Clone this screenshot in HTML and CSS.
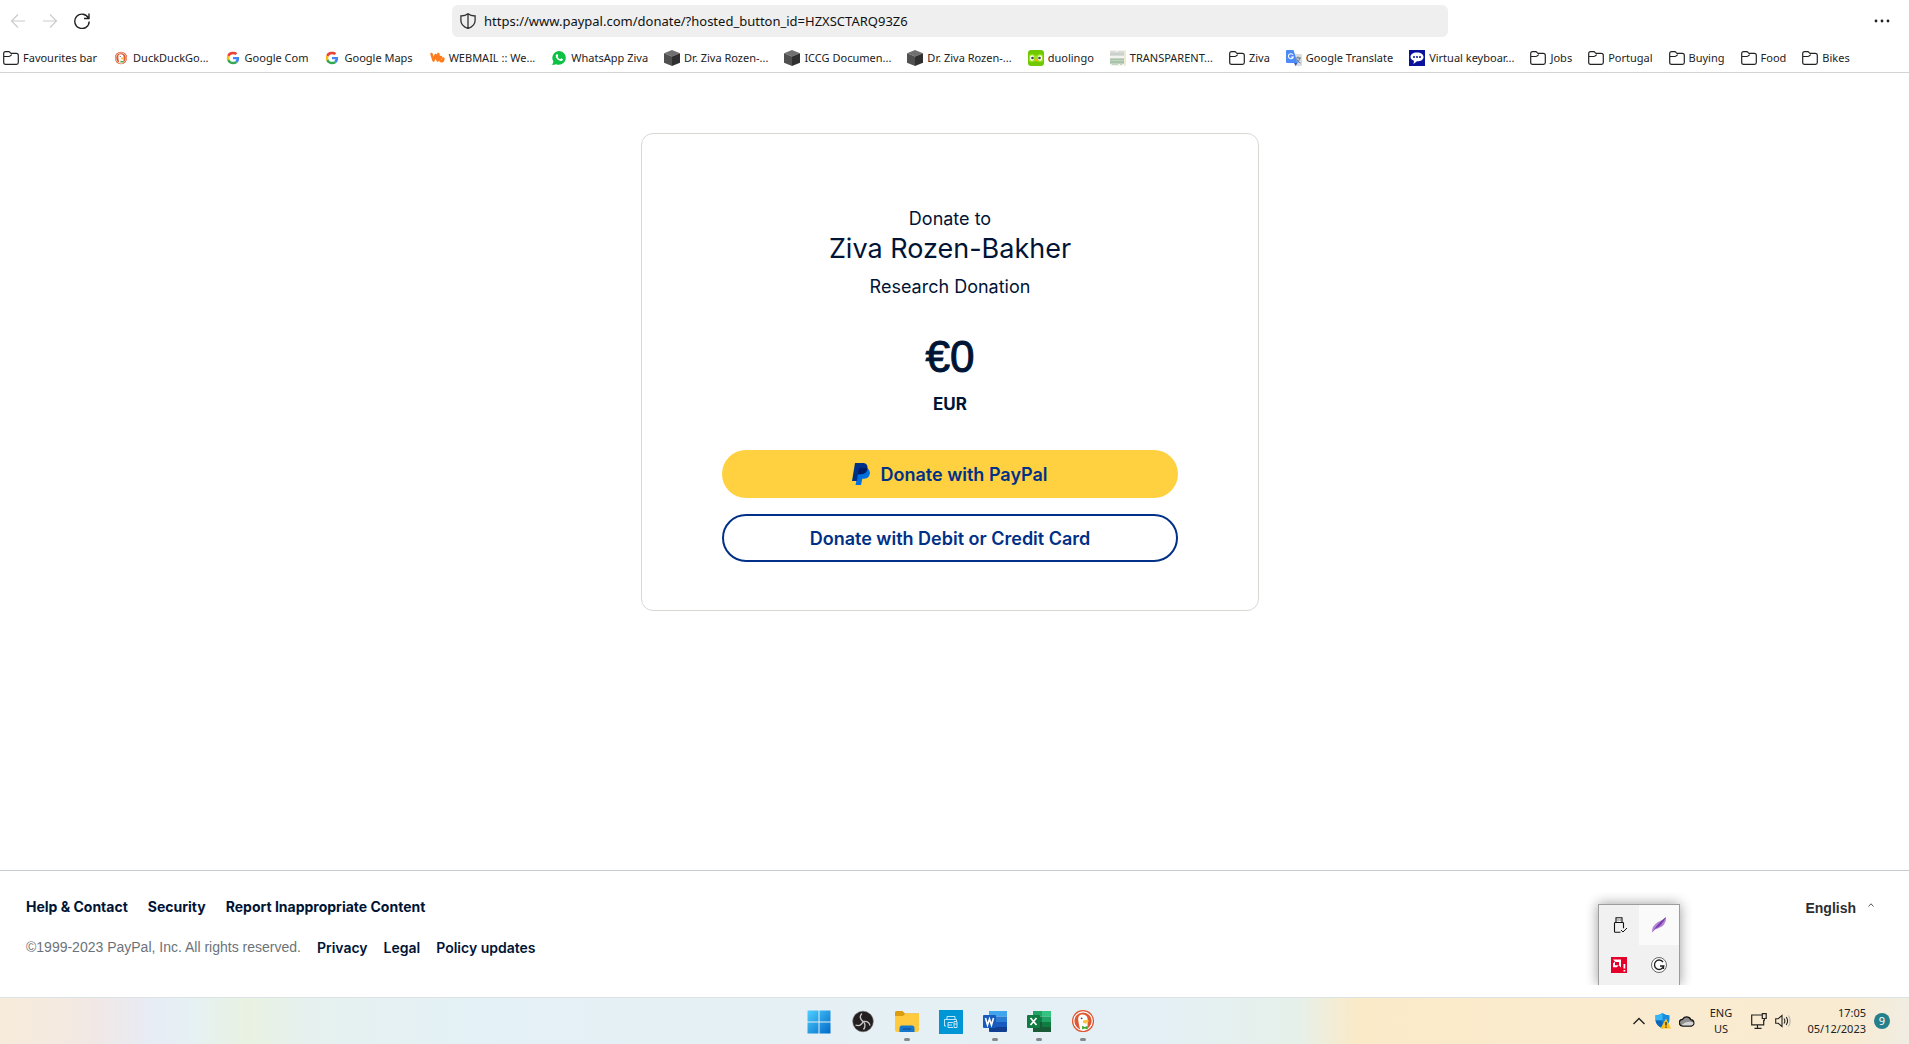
FILE: index.html
```html
<!DOCTYPE html>
<html lang="en">
<head>
<meta charset="utf-8">
<meta name="viewport" content="width=device-width, initial-scale=1">
<title>Donate</title>
<link rel="stylesheet" href="styles.css">
</head>
<body>
<svg class="defs" aria-hidden="true">
  <symbol id="folder" viewBox="0 0 16 16"><path d="M.7 12.5v-9q0-1.8 1.8-1.8h3.2q.8 0 1.3.6l1 1.1h5.300q2 0 2 2v7.100q0 1.800-1.800 1.800h-11q-1.800 0-1.800-1.800zM.7 6.500h5.200q.8 0 1.400-.6l1.500-1.300" fill="none" stroke="#222" stroke-width="1.200"/></symbol>
  <symbol id="google" viewBox="0 0 48 48"><path fill="#ea4335" d="M24 9.500c3.540 0 6.710 1.220 9.210 3.600l6.850-6.850C35.900 2.380 30.470 0 24 0 14.620 0 6.510 5.380 2.560 13.220l7.980 6.190C12.430 13.720 17.740 9.500 24 9.500z"/><path fill="#4285f4" d="M46.980 24.550c0-1.570-.15-3.090-.38-4.550H24v9.020h12.940c-.58 2.960-2.260 5.480-4.780 7.180l7.730 6c4.510-4.180 7.090-10.360 7.090-17.650z"/><path fill="#fbbc05" d="M10.530 28.590c-.48-1.450-.76-2.990-.76-4.590s.27-3.140.76-4.590l-7.980-6.190C.92 16.460 0 20.120 0 24s.92 7.540 2.560 10.780l7.970-6.190z"/><path fill="#34a853" d="M24 48c6.480 0 11.930-2.130 15.890-5.810l-7.730-6c-2.150 1.450-4.920 2.300-8.160 2.300-6.260 0-11.570-4.220-13.470-9.910l-7.980 6.190C6.510 42.620 14.620 48 24 48z"/></symbol>
  <symbol id="cube" viewBox="0 0 16 16"><path d="M8 0l8 3.200L8 6.400 0 3.200z" fill="#707070"/><path d="M0 3.200l8 3.200V16l-8-3.200z" fill="#505050"/><path d="M16 3.200L8 6.400V16l8-3.200z" fill="#303030"/></symbol>
  <symbol id="duck" viewBox="0 0 24 24"><circle cx="12" cy="12" r="12" fill="#de5833"/><circle cx="12" cy="12" r="10" fill="none" stroke="#fff" stroke-width="1.300"/><path d="M9 21.500C8 17 6.500 12 6.800 9c.2-2 1.500-3.500 3.500-4 4-.6 6.700 1.500 6.700 5v8c0 1-1 3-2 3.600-2 .5-4 .5-6-.1z" fill="#fff"/><circle cx="10.500" cy="9" r="1" fill="#34495e"/><path d="M12 11.500c3-.8 6-.8 6.500.3.200.9-2 1.200-3.500 1.300 1.500.6 2 1.300.7 1.600-2.500.3-4.700-1-3.700-3.200z" fill="#fdc02f"/><path d="M11 17l3 1.500 3-1.500v4l-3-1-3 1z" fill="#42a936"/></symbol>
</svg>

<header class="browser">
  <div class="toolbar">
    <div class="nav">
      <button class="tool" aria-label="Back" disabled><svg viewBox="0 0 16 16"><path d="M15 8H1.500M8 1.500L1.500 8 8 14.500" fill="none" stroke="#ccc" stroke-width="1.200"/></svg></button>
      <button class="tool" aria-label="Forward" disabled><svg viewBox="0 0 16 16"><path d="M1 8h13.500M8 1.500L14.500 8 8 14.500" fill="none" stroke="#ccc" stroke-width="1.200"/></svg></button>
      <button class="tool" aria-label="Reload"><svg viewBox="0 0 16 16"><path d="M14.500 5.200A7.200 7.200 0 1 0 15.200 8.500M15 .5v5h-5" fill="none" stroke="#222" stroke-width="1.400"/></svg></button>
    </div>
    <div class="address">
      <svg class="i16" viewBox="0 0 16 16"><path d="M8 .8C6 2.400 3.500 2.900.9 3v4.500C.9 11.500 4 14 8 15.500c4-1.500 7.100-4 7.100-8V3C12.500 2.900 10 2.400 8 .8zM8 .8v14.700" fill="none" stroke="#333" stroke-width="1.300"/></svg>
      <input class="url" type="text" aria-label="Address" value="https://www.paypal.com/donate/?hosted_button_id=HZXSCTARQ93Z6">
    </div>
    <div class="menu">
      <button class="tool" aria-label="Menu"><svg viewBox="0 0 16 16"><g fill="#222"><circle cx="2" cy="8" r="1.400"/><circle cx="8" cy="8" r="1.400"/><circle cx="14" cy="8" r="1.400"/></g></svg></button>
    </div>
  </div>
  <nav class="bookmarks" aria-label="Bookmarks">
    <a href="#"><svg><use href="#folder"/></svg>Favourites bar</a>
    <a href="#"><svg viewBox="-2 -1 18 18"><use href="#duck" width="14" height="16"/></svg>DuckDuckGo...</a>
    <a href="#"><svg viewBox="-2 -2 20 20"><use href="#google" width="16" height="16"/></svg>Google Com</a>
    <a href="#"><svg viewBox="-2 -2 20 20"><use href="#google" width="16" height="16"/></svg>Google Maps</a>
    <a href="#"><svg viewBox="0 0 16 16"><path d="M2.500 4l2 6.500L6.700 5l2 5.500Q10.300 8 9.300 4M12 7q-1.500 4 .3 4.300 2.200.2 2-2.800" fill="none" stroke="#ff7a1a" stroke-width="2.500" stroke-linejoin="round" stroke-linecap="round"/></svg>WEBMAIL :: We...</a>
    <a href="#"><svg viewBox="0 0 16 16"><path d="M8.300 1A6.900 6.900 0 0 0 2.400 11.500L1.200 15.200l3.900-1A6.900 6.900 0 1 0 8.300 1z" fill="#0cc143"/><path d="M5.300 4.500q1-1 1.500.2l.5 1.200-.7 1q1 1.700 2.700 2.300l.8-.9 1.900.9q-.2 2-2.200 1.800Q5.300 10 4.700 6q0-1 .6-1.500z" fill="#fff"/></svg>WhatsApp Ziva</a>
    <a href="#"><svg><use href="#cube"/></svg>Dr. Ziva Rozen-...</a>
    <a href="#"><svg><use href="#cube"/></svg>ICCG Documen...</a>
    <a href="#"><svg><use href="#cube"/></svg>Dr. Ziva Rozen-...</a>
    <a href="#"><svg viewBox="0 0 16 16"><rect width="16" height="16" rx="3" fill="#70c800"/><path d="M1 6q0-2 3-2 2.500 0 4 2 1.500-2 4-2 3 0 3 2v4q0 2-3 2T8 10q-1 2-4 2t-3-2z" fill="#9be51d"/><ellipse cx="4" cy="8" rx="2" ry="2.800" fill="#fff"/><ellipse cx="12" cy="8" rx="2" ry="2.800" fill="#fff"/><circle cx="4.500" cy="8" r="1.300" fill="#444"/><circle cx="11.500" cy="8" r="1.300" fill="#444"/><path d="M6.500 9.500q1.500-1.500 3 0L8 12z" fill="#ffb000"/></svg>duolingo</a>
    <a href="#"><svg viewBox="0 0 16 16"><rect width="16" height="16" fill="#f3f4f0"/><path d="M1 1v5M3 1v5M5 1v5M7 2v4M9 1v5M11 1v5M13 1v5M0 4h14" stroke="#bcc4c2"/><path d="M1 9v5M3 9v6M5 9v6M7 9v6M9 9v5M11 9v6M13 9v5M0 9h14M0 12h14" stroke="#8fb392"/><path d="M15 1v14" stroke="#eadfb5"/></svg>TRANSPARENT...</a>
    <a href="#"><svg><use href="#folder"/></svg>Ziva</a>
    <a href="#"><svg viewBox="0 0 16 16"><path d="M7 4h8q1 0 1 1v10q0 1-1 1H9.500z" fill="#dadce0"/><path d="M9 8h6M12 6.500V8M14 8q-1 4-4 5M10.500 9q1 3 4 4" stroke="#607d8b" fill="none"/><path d="M1 0h6.500l4 13H1q-1 0-1-1V1q0-1 1-1z" fill="#4c8bf5"/><path d="M8 13h3.500L9.500 16z" fill="#3559c7"/><path d="M7 4.800A2.500 2.500 0 1 0 7.300 7H5" fill="none" stroke="#fff" stroke-width="1.100"/></svg>Google Translate</a>
    <a href="#"><svg viewBox="0 0 16 16"><rect width="16" height="16" fill="#0a129b"/><path d="M8 2.500c4 0 6.500 1.800 6.500 4.500S12 11.300 8 11.300L4.500 14l.5-3.200C2.800 10 1.500 8.700 1.500 7c0-2.700 2.500-4.500 6.500-4.500z" fill="#fff"/><path d="M4 6.300h2v1.500H4zm3 0h2v1.500H7zm3 0h2v1.500h-2z" fill="#0a129b"/></svg>Virtual keyboar...</a>
    <a href="#"><svg><use href="#folder"/></svg>Jobs</a>
    <a href="#"><svg><use href="#folder"/></svg>Portugal</a>
    <a href="#"><svg><use href="#folder"/></svg>Buying</a>
    <a href="#"><svg><use href="#folder"/></svg>Food</a>
    <a href="#"><svg><use href="#folder"/></svg>Bikes</a>
  </nav>
</header>

<main class="page">
  <section class="card">
    <p class="lead">Donate to</p>
    <h1 class="name">Ziva Rozen-Bakher</h1>
    <p class="purpose">Research Donation</p>
    <p class="amount">€0</p>
    <p class="currency">EUR</p>
    <button class="btn btn-paypal"><svg class="pp" viewBox="0 0 18 22"><path d="M6 5h9q3.500 2 2.800 6-1 4.500-5.500 4.700h-2L9 22H3.500L5 15z" fill="#0070e0"/><path d="M3 0h8.500q4.500.5 4 5.500-1 5.500-6.500 5.700H6L4.900 18H0z" fill="#003087"/><path d="M15.500 5.200q-1 5.800-6.500 6H6l.8-4.700Q7 5 8.500 4.800h5q1.300 0 2 .4z" fill="#001c64"/></svg>Donate with PayPal</button>
    <button class="btn btn-card">Donate with Debit or Credit Card</button>
  </section>
</main>

<footer class="footer">
  <div class="links">
    <div class="row row-main"><a href="#">Help &amp; Contact</a><a href="#">Security</a><a href="#">Report Inappropriate Content</a></div>
    <div class="row row-legal"><span class="copy">©1999-2023 PayPal, Inc. All rights reserved.</span><a href="#">Privacy</a><a href="#">Legal</a><a href="#">Policy updates</a></div>
  </div>
  <button class="language">English<svg viewBox="0 0 6 4"><path d="M.5 3.500L3 .8l2.500 2.700" fill="none" stroke="#555"/></svg></button>
  <div class="popup-clip">
    <div class="popup">
      <button aria-label="Eject USB"><svg viewBox="0 0 16 16"><path d="M5 5.500V.7h6v4.800M9.500 15.300H4.200q-.7 0-.7-.7V6.200q0-.7.7-.7h7.600q.7 0 .7.700v5M6.500 3h1M8.700 3h1" fill="none" stroke="#111" stroke-width="1.100"/><path d="M10 13l2 2 4-4" fill="none" stroke="#111"/></svg></button>
      <button class="lit" aria-label="Quill"><svg viewBox="0 0 16 16"><path d="M1 15.500Q.5 9 7 5q5-2 8-5 .5 6-4 9.500-4 2-7 3z" fill="#b388d6"/><path d="M1 15.500Q6 7 15 0q-4 9-11 12z" fill="#7d3cae"/></svg></button>
      <button aria-label="Graphics"><svg viewBox="0 0 16 16"><rect width="16" height="16" fill="#e4002b"/><path d="M2 2.500h8v8l-2-2V5H4.500zM2 6.500l2-2v3.800h3.800l-2 2H2z" fill="#fff"/><path d="M12.500 7h1.800v4.500h-1.800zm0 6h1.800v1.500h-1.800z" fill="#fff"/></svg></button>
      <button aria-label="Grammar"><svg viewBox="0 0 16 16"><circle cx="8" cy="8" r="7.500" fill="#fff" stroke="#444" stroke-width=".8"/><path d="M12 5a4.700 4.700 0 1 0 .7 4H9M12.500 8.500V12" fill="none" stroke="#222" stroke-width="1.400"/></svg></button>
    </div>
  </div>
</footer>

<div class="taskbar">
  <div class="apps">
    <button aria-label="Start"><svg viewBox="0 0 24 24"><defs><linearGradient id="win" x2="1" y2="1"><stop stop-color="#4fd0ff"/><stop offset="1" stop-color="#0068c8"/></linearGradient></defs><path d="M.5.500h11v11H.5zm12 0h11v11h-11zm-12 12h11v11H.5zm12 0h11v11h-11z" fill="url(#win)"/></svg></button>
    <button aria-label="Recorder"><svg viewBox="0 0 24 24"><circle cx="12" cy="11.500" r="10.300" fill="#231f20" stroke="#666" stroke-width=".6"/><path d="M11 3.500q-4 4 1 8 6-1 7 4M12 11.500Q10 17 4.500 15M12.500 11.500q3 4 0 8M12 11.500Q8 8 10 5" fill="none" stroke="#c8c6c6" stroke-width="1.300"/></svg></button>
    <button class="open" aria-label="Files"><svg viewBox="0 0 24 24"><path d="M0 2.500Q0 1 1.500 1h6l2.500 2.500H24V8H0z" fill="#dd9c0b"/><path d="M0 6h8l2.500-2.500H23q1 0 1 1V20q0 2-2 2H2q-2 0-2-2z" fill="#ffca3e"/><path d="M4.500 22v-4q0-2.500 2.500-2.500h10q2.500 0 2.500 2.500v4z" fill="#1476cc"/><path d="M8 19h8" stroke="#0a4a8c"/></svg></button>
    <button aria-label="Printer"><svg viewBox="0 0 24 24"><rect width="24" height="24" fill="#0096d6"/><path d="M8 9V6.500h8V9M7 16H5.500V9.500h12V11M9 17.500v-5h5M9 15h4M9 17.500h5M15 11.500h3v6h-3zM15 14h3" fill="none" stroke="#d5f0ff" stroke-width=".9"/></svg></button>
    <button class="open" aria-label="Word"><svg viewBox="0 0 24 24"><path d="M6 1h18v5.500H6z" fill="#41a5ee"/><path d="M6 6.500h18V12H6z" fill="#2b7cd3"/><path d="M6 12h18v5H6z" fill="#185abd"/><path d="M6 17h18v4q0 1-1 1H7q-1 0-1-1z" fill="#103f91"/><rect y="5" width="13" height="13" rx="1" fill="#185abd"/><path d="M2.500 8l2 7 2-6 2 6 2-7" fill="none" stroke="#fff" stroke-width="1.600"/></svg></button>
    <button class="open" aria-label="Excel"><svg viewBox="0 0 24 24"><path d="M6 1h9v5.500H6z" fill="#21a366"/><path d="M15 1h9v5.500h-9z" fill="#33c481"/><path d="M6 6.500h9V12H6z" fill="#107c41"/><path d="M15 6.500h9V12h-9z" fill="#21a366"/><path d="M6 12h18v10H6z" fill="#185c37"/><path d="M15 12h9v5h-9z" fill="#107c41"/><rect y="5" width="13" height="13" rx="1" fill="#107c41"/><path d="M3.500 8l6 7M9.500 8l-6 7" stroke="#fff" stroke-width="1.700"/></svg></button>
    <button class="open" aria-label="Duck browser"><svg viewBox="-1 0 26 26"><use href="#duck" width="24" height="24"/></svg></button>
  </div>
  <div class="tray">
    <svg class="i16" viewBox="0 0 16 16"><path d="M2.500 11L8 5.500l5.500 5.500" fill="none" stroke="#222" stroke-width="1.400"/></svg>
    <svg class="i16" viewBox="0 0 16 16"><path d="M7.500 0Q10.500 2.200 14.500 2.300V7q0 5-7 8.500Q.5 12 .5 7V2.300Q4.500 2.200 7.500 0z" fill="#168bdf"/><path d="M7.500 0v7.500H.5V2.300Q4.500 2.200 7.500 0z" fill="#35b7f5"/><path d="M7.500 7.500v8Q1 12 .5 7.500z" fill="#0d64b8"/><path d="M11 5.500l5 10H5.500z" fill="#ffc21a"/><path d="M11 9v3.500M11 13.500v1.200" stroke="#222" stroke-width="1.300"/></svg>
    <svg class="i16" viewBox="0 0 16 16"><path d="M3.800 13a3.300 3.300 0 0 1-.3-6.600 4.600 4.600 0 0 1 8.300.3 3.200 3.200 0 0 1 .6 6.300z" fill="#8f8f8f" stroke="#111" stroke-width="1.300"/><path d="M2.500 12Q8 7 14.500 9.500q0 2.800-2.500 2.900H4q-1 0-1.500-.4z" fill="#d4d4d4"/></svg>
    <div class="lang"><span>ENG</span><span>US</span></div>
    <svg class="i16" viewBox="0 0 16 16"><path d="M11 2H.7v9.800h12V7M6.500 12v3M3.500 15.300h7M11.300.7h3.900v4.800h-3.900zM13.300 5.500v2.500" fill="none" stroke="#222" stroke-width="1.200"/></svg>
    <svg class="i16" viewBox="0 0 16 16"><path d="M.7 5.700h2.500L7 2.500v11l-3.800-3.200H.7zM9 5.500q1.800 2.500 0 5M11.200 4q2.800 4 0 8" fill="none" stroke="#222" stroke-width="1.100"/><path d="M13.500 2.500q3.300 5.500 0 11" fill="none" stroke="#aaa"/></svg>
    <div class="clock"><span>17:05</span><span>05/12/2023</span></div>
    <span class="badge">9</span>
  </div>
</div>
</body>
</html>
```
FILE: styles.css
```css
* { box-sizing: border-box; }
body {
  margin: 0;
  min-height: 100vh;
  display: flex;
  flex-direction: column;
  background: #fff;
  color: #001435;
  font-family: Inter, "Liberation Sans", sans-serif;
}
p, h1 { margin: 0; font-weight: 400; }
a { color: inherit; text-decoration: none; }
button { border: 0; padding: 0; background: none; color: inherit; font: inherit; }
svg { display: block; flex: none; }
.defs { position: absolute; width: 0; height: 0; }
.i16 { width: 16px; height: 16px; }

/* Browser chrome */
.browser {
  border-bottom: 1px solid #d4d4d4;
  color: #222;
  font-family: "Noto Sans", "Open Sans", sans-serif;
}
.toolbar {
  display: grid;
  grid-template-columns: 1fr 996px 1fr;
  align-items: center;
  padding: 5px 9px 0 0;
}
.nav { display: flex; gap: 16px; padding-left: 10px; }
.tool { width: 16px; height: 16px; }
.tool svg { width: 16px; height: 16px; }
.menu { display: flex; justify-content: flex-end; padding-right: 10px; }
.address {
  display: flex;
  align-items: center;
  gap: 8px;
  height: 32px;
  padding: 0 8px;
  border-radius: 6px;
  background: #efefef;
}
.url {
  flex: 1;
  border: 0;
  padding: 0;
  background: none;
  color: #111;
  font: 13px/20px "Noto Sans", "Open Sans", sans-serif;
}
.bookmarks {
  display: flex;
  align-items: center;
  gap: 16px;
  height: 35px;
  padding: 7px 3px 0;
  font-size: 11px;
  line-height: 16px;
  white-space: nowrap;
}
.bookmarks a { display: flex; align-items: center; gap: 4px; }
.bookmarks svg { width: 16px; height: 16px; }

/* Donation card */
.page { flex: 1; padding: 60px 9px 60px 0; }
.card {
  display: flex;
  flex-direction: column;
  width: 618px;
  margin: 0 auto;
  padding: 73px 80px 48px;
  border: 1px solid #d9d9d2;
  border-radius: 12px;
  text-align: center;
}
.lead, .purpose { font-size: 18px; line-height: 24px; }
.name { font-size: 27px; line-height: 36px; }
.purpose { margin-top: 8px; }
.amount {
  margin-top: 30px;
  font: 44px/56px "Liberation Sans", sans-serif;
  -webkit-text-stroke: 1px;
}
.currency { margin-top: 7px; font-size: 17px; line-height: 24px; font-weight: 700; }
.btn {
  display: flex;
  align-items: center;
  justify-content: center;
  gap: 10px;
  height: 48px;
  border-radius: 24px;
  color: #003087;
  font-size: 18px;
  font-weight: 600;
}
.btn-paypal { margin-top: 34px; background: #ffd140; }
.btn-card { margin-top: 16px; border: 2px solid #003087; }
.pp { width: 18px; height: 22px; }

/* Footer */
.footer {
  position: relative;
  display: flex;
  justify-content: space-between;
  align-items: flex-start;
  height: 127px;
  padding: 25px 35px 0 26px;
  border-top: 1px solid #c5cdd0;
  font-size: 14px;
  line-height: 21px;
}
.links { display: flex; flex-direction: column; gap: 20px; }
.row { display: flex; }
.row-main { gap: 20px; font-weight: 700; }
.row-legal { gap: 16px; font-weight: 600; }
.copy { color: #6c7378; font-family: "Liberation Sans", sans-serif; font-weight: 400; }
.language {
  display: flex;
  gap: 12px;
  margin-top: 2px;
  color: #2c2e2f;
  font: 700 14px/21px "Liberation Sans", sans-serif;
}
.language svg { width: 6px; height: 4px; margin-top: 5px; }
.popup-clip {
  position: absolute;
  right: 217px;
  bottom: 12px;
  padding: 12px 12px 0;
  overflow: hidden;
}
.popup {
  display: grid;
  grid-template-columns: 40px 40px;
  grid-auto-rows: 40px;
  border: 1px solid #9d9d9d;
  border-bottom: 0;
  background: #f1f1f1;
  box-shadow: 0 0 12px #0006;
}
.popup button { display: grid; place-items: center; }
.popup svg { width: 16px; height: 16px; }
.popup .lit { background: #fafafa; }

/* Taskbar */
.taskbar {
  display: grid;
  grid-template-columns: 1fr auto 1fr;
  align-items: center;
  height: 47px;
  padding-right: 7px;
  border-top: 1px solid #dbe3e4;
  background: linear-gradient(90deg, #f7ebdb, #f5eae0 3%, #f1e8e6 5%, #e7ecf5 8%, #e6f1f4 10%, #e9f2e1 13%, #e6f1ef 16%, #e4f1f6 25%, #e6f0f4 43%, #e4f0f6 60%, #e6f0ea 68%, #faeac8 71%, #faebcf 84%, #f9ebd2 97%, #f0ede2);
  color: #222;
  font-family: "Noto Sans", "Open Sans", sans-serif;
}
.apps { grid-column: 2; display: flex; }
.apps button {
  display: flex;
  flex-direction: column;
  align-items: center;
  gap: 4px;
  width: 44px;
  height: 46px;
  padding-top: 12px;
}
.apps svg { width: 24px; height: 24px; }
.open::after { content: ""; width: 6px; height: 3px; border-radius: 2px; background: #858789; }
.tray {
  display: flex;
  align-items: center;
  justify-content: flex-end;
  gap: 8px;
  padding-right: 12px;
  font-size: 11px;
  line-height: 16px;
}
.lang, .clock { display: flex; flex-direction: column; }
.lang { align-items: center; width: 40px; padding-right: 4px; }
.clock { align-items: flex-end; width: 67px; }
.badge {
  width: 16px;
  height: 16px;
  border-radius: 50%;
  background: #26808c;
  color: #fff;
  text-align: center;
}
```
